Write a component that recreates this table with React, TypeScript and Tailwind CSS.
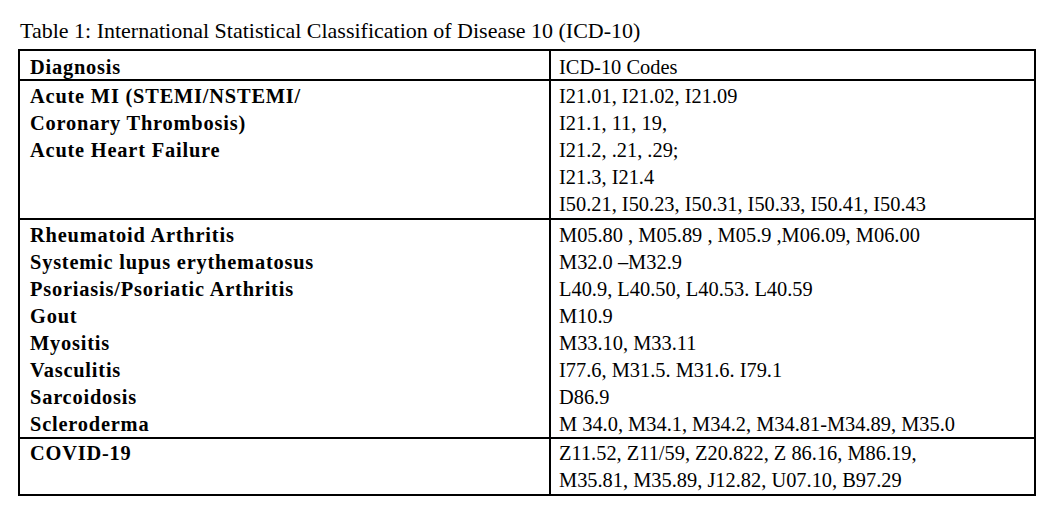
const groups = [
  {
    h: 'h-[139px]',
    pt: 'pt-[2px]',
    left: ['Acute MI (STEMI/NSTEMI/', 'Coronary Thrombosis)', 'Acute Heart Failure'],
    right: [
      'I21.01, I21.02, I21.09',
      'I21.1, 11, 19,',
      'I21.2, .21, .29;',
      'I21.3, I21.4',
      'I50.21, I50.23, I50.31, I50.33, I50.41, I50.43',
    ],
  },
  {
    h: 'h-[219px]',
    pt: 'pt-[2px]',
    left: [
      'Rheumatoid Arthritis',
      'Systemic lupus erythematosus',
      'Psoriasis/Psoriatic Arthritis',
      'Gout',
      'Myositis',
      'Vasculitis',
      'Sarcoidosis',
      'Scleroderma',
    ],
    right: [
      'M05.80 , M05.89 , M05.9 ,M06.09, M06.00',
      'M32.0 \u2013M32.9',
      'L40.9, L40.50, L40.53. L40.59',
      'M10.9',
      'M33.10, M33.11',
      'I77.6, M31.5. M31.6. I79.1',
      'D86.9',
      'M 34.0, M34.1, M34.2, M34.81-M34.89, M35.0',
    ],
  },
  {
    h: 'h-[57px]',
    pt: 'pt-[1px]',
    left: ['COVID-19'],
    right: ['Z11.52, Z11/59, Z20.822, Z 86.16, M86.19,', 'M35.81, M35.89, J12.82, U07.10, B97.29'],
  },
];

function Lines({ items }: { items: string[] }) {
  return (
    <>
      {items.map((t, i) => (
        <div key={i} className="h-[27px] whitespace-nowrap">
          {t}
        </div>
      ))}
    </>
  );
}

export default function App() {
  return (
    <div
      className="h-[532px] w-[1059px] bg-white pl-[18px] pt-[16px] text-[20.4px] leading-[27px] text-black"
      style={{ fontFamily: '"Liberation Serif", "Times New Roman", serif' }}
    >
      <div className="h-[33px] pl-[2px] text-[22px] leading-[29px]">
        Table 1: International Statistical Classification of Disease 10 (ICD-10)
      </div>

      <div className="w-[1018px] border-2 border-black">
        {/* header */}
        <div className="flex h-[28px]">
          <div className="w-[531px] border-r-2 border-black pl-[10px] pt-[3px] font-bold tracking-[0.8px]">
            Diagnosis
          </div>
          <div className="flex-1 pl-[8px] pt-[3px]">ICD-10 Codes</div>
        </div>

        {groups.map((g, i) => (
          <div key={i} className={`flex border-t-2 border-black ${g.h}`}>
            <div className={`w-[531px] border-r-2 border-black pl-[10px] font-bold tracking-[0.8px] ${g.pt}`}>
              <Lines items={g.left} />
            </div>
            <div className={`flex-1 pl-[8px] ${g.pt}`}>
              <Lines items={g.right} />
            </div>
          </div>
        ))}
      </div>
    </div>
  );
}
